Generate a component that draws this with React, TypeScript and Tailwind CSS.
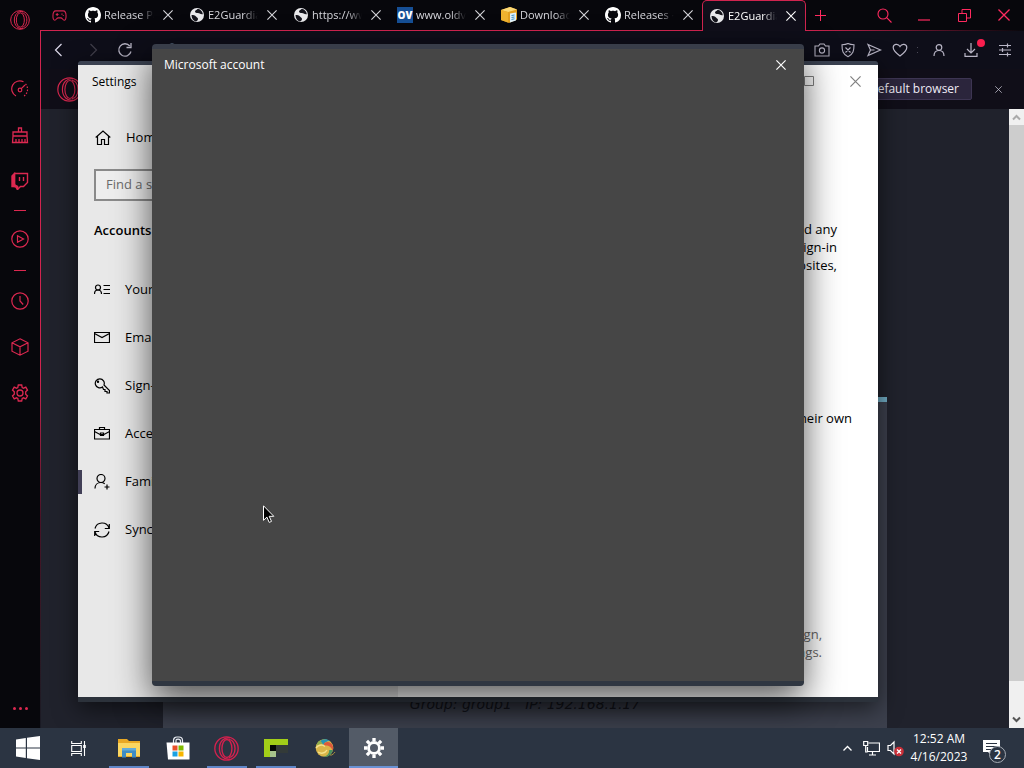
import React, { type ReactNode } from 'react';

type IconProps = { size?: number; width?: number; className?: string; children?: ReactNode; box?: number };

function Icon({ size = 18, width = 1.2, className = '', children, box = 18 }: IconProps) {
  return (
    <svg
      width={size}
      height={size}
      viewBox={`0 0 ${box} ${box}`}
      fill="none"
      stroke="currentColor"
      strokeWidth={width}
      className={`shrink-0 ${className}`}
      aria-hidden="true"
    >
      {children}
    </svg>
  );
}

function Cross({ size = 10, width = 1.1 }: { size?: number; width?: number }) {
  return (
    <Icon size={size} box={10} width={width}>
      <path d="M.4.4l9.2 9.2M9.6.4L.4 9.6" />
    </Icon>
  );
}

function OperaLogo({ size = 20, width = 1.2 }: { size?: number; width?: number }) {
  return (
    <Icon size={size} box={24} width={width}>
      <circle cx="12" cy="12" r="11.2" />
      <ellipse cx="12.4" cy="12" rx="4.8" ry="8.6" />
      <path d="M15.5 1.8C9.5.8 5.2 5.5 5.2 12s4.3 11.200 10.300 10.200M14.200 3.600c3.500-.6 6 3.600 6 8.400s-2.500 9-6 8.400" />
    </Icon>
  );
}

function GithubLogo() {
  return (
    <svg width="16" height="16" viewBox="0 0 16 16" fill="#fff" className="shrink-0" aria-hidden="true">
      <path d="M8 0C3.580 0 0 3.580 0 8c0 3.540 2.290 6.530 5.470 7.590.4.070.55-.17.55-.38 0-.19-.01-.82-.01-1.490-2.010.37-2.530-.49-2.690-.94-.09-.23-.48-.94-.82-1.130-.28-.15-.68-.52-.01-.53.63-.01 1.080.58 1.230.82.72 1.210 1.870.87 2.330.66.07-.52.28-.87.51-1.070-1.780-.2-3.640-.89-3.640-3.950 0-.87.31-1.590.82-2.150-.08-.2-.36-1.020.08-2.120 0 0 .67-.21 2.200.82.64-.18 1.320-.27 2-.27s1.360.09 2 .27c1.530-1.040 2.200-.82 2.200-.82.44 1.100.16 1.920.08 2.120.51.56.82 1.270.82 2.150 0 3.070-1.870 3.750-3.650 3.950.29.25.54.73.54 1.480 0 1.070-.01 1.930-.01 2.200 0 .21.15.46.55.38A8.010 8.010 0 0016 8c0-4.420-3.580-8-8-8z" />
    </svg>
  );
}

function GlobeLogo() {
  return (
    <svg width="16" height="16" viewBox="0 0 16 16" className="shrink-0" aria-hidden="true">
      <circle cx="8" cy="8" r="7" fill="#e9e9ec" />
      <path d="M2.500 8c2 .2 3.500 0 4.500 1.500s2 1 2 2.500-1.500 2-2 2.600C4.500 14 2.500 11.500 2.500 8z" fill="#14141c" />
      <path d="M8.500 2c-1 1.500-2.500 1.300-2.500 2.500s1.500 1.500 3 1.500 2 1.500 4.800 1.200C13.500 4 11 2 8.500 2z" fill="#14141c" />
    </svg>
  );
}

function OldVersionLogo() {
  return (
    <span className="flex size-4 shrink-0 items-center justify-center bg-[#164f96] font-['Open_Sans',sans-serif] text-[10px] font-extrabold leading-none text-white">
      OV
    </span>
  );
}

function BoxLogo() {
  return (
    <svg width="16" height="16" viewBox="0 0 16 16" className="shrink-0" aria-hidden="true">
      <path d="M0 3L9 0l7 2.500v10L8 16 0 13z" fill="#e3a020" />
      <path d="M0 3l7 2 9-2.500L9 0z" fill="#fbd875" />
      <path d="M0 3l7 2v10.500L0 13z" fill="#f0b32f" />
      <path d="M9 6.500l6-1v8l-6 2z" fill="#dff1fb" />
      <path d="M10.500 8.500l3-.5M10.500 10.500l3-.5M10.500 12.500l3-.7" stroke="#3f8fc0" />
    </svg>
  );
}

const tabs = [
  { title: 'Release Page', icon: <GithubLogo /> },
  { title: 'E2Guardian', icon: <GlobeLogo /> },
  { title: 'https://www', icon: <GlobeLogo /> },
  { title: 'www.oldversion', icon: <OldVersionLogo /> },
  { title: 'Downloads', icon: <BoxLogo /> },
  { title: 'Releases ·', icon: <GithubLogo /> },
  { title: 'E2Guardian', icon: <GlobeLogo />, active: true },
];

function TabStrip() {
  return (
    <div className="flex h-[31px] shrink-0 text-[#ff2a5f]">
      <button aria-label="GX Corner" className="flex w-[38px] shrink-0 items-center justify-center border-b border-[#d0244f]">
        <Icon size={15} box={16} width={1.200} className="text-[#d0244f]">
          <path d="M4 3h8c2 0 3 2 3 5.500 0 3-.7 4.500-2 4.500-1.500 0-2-2.500-3.500-2.500h-3C5 10.500 4.500 13 3 13c-1.300 0-2-1.500-2-4.500C1 5 2 3 4 3zM5.500 5.300v3.200M4 6.900h3M10 6.500h1.300M11.500 8h1" />
        </Icon>
      </button>
      {tabs.map((tab, i) => (
        <div
          key={i}
          className={
            tab.active
              ? 'flex w-[104px] shrink-0 items-center rounded-t-[5px] border border-b-0 border-[#d0244f] bg-[#100f1a] pl-1.5 text-white'
              : 'flex w-[104px] shrink-0 items-center border-b border-[#d0244f] pl-[7px] text-[#d6d6dc]'
          }
        >
          {tab.icon}
          <button className="ml-[3px] flex-1 overflow-hidden whitespace-nowrap text-left text-[11px] [mask-image:linear-gradient(to_right,black_70%,transparent)]">
            {tab.title}
          </button>
          <button aria-label={`Close ${tab.title}`} className="flex w-7 shrink-0 items-center justify-center">
            <Cross />
          </button>
        </div>
      ))}
      <div className="flex flex-1 flex-col">
        <div className="flex flex-1 items-center">
          <button aria-label="New tab" className="flex w-7 justify-center">
            <Icon size={11} box={11} width={1}>
              <path d="M5.500 0v11M0 5.500h11" />
            </Icon>
          </button>
          <div className="flex-1" />
          <button aria-label="Search tabs" className="flex w-10 justify-center">
            <Icon size={15} box={15} width={1.100}>
              <circle cx="6" cy="6" r="5" />
              <path d="M9.700 9.700L14.500 14.500" />
            </Icon>
          </button>
          <button aria-label="Minimize" className="flex w-10 justify-center">
            <Icon size={12} box={12} width={1.200}>
              <path d="M0 11h12" />
            </Icon>
          </button>
          <button aria-label="Restore" className="flex w-10 justify-center">
            <Icon size={13} box={13} width={1}>
              <path d="M.5 4.500h8v8h-8zM4 4V.5h8.500V9H9" />
            </Icon>
          </button>
          <button aria-label="Close browser" className="flex w-10 justify-center">
            <Cross size={12} />
          </button>
        </div>
        <div className="h-px bg-linear-to-r from-[#d0244f] to-transparent" />
      </div>
    </div>
  );
}

function Toolbar() {
  return (
    <div className="flex h-[38px] shrink-0 items-center bg-[#0e0e19] text-[#b9b6c6]">
      <button aria-label="Back" className="flex w-9 justify-center">
        <Icon size={14} box={14}>
          <path d="M9.500 1L3.500 7l6 6" className="stroke-[#dcd9ea]" />
        </Icon>
      </button>
      <button aria-label="Forward" className="flex w-8 justify-center text-[#403e4a]">
        <Icon size={14} box={14}>
          <path d="M4.500 1l6 6-6 6" />
        </Icon>
      </button>
      <button aria-label="Reload" className="flex w-8 justify-center">
        <Icon size={16} box={16} width={1.300}>
          <path d="M14 9.500A6.200 6.200 0 1 1 12.800 4M14 1v4.500H9.500" />
        </Icon>
      </button>
      <div className="flex flex-1 pl-6 text-[#8fb0d0]">
        <Icon size={14} box={14}>
          <circle cx="7" cy="7" r="6" />
        </Icon>
      </div>
      <button aria-label="Snapshot" className="flex w-[26px] justify-center">
        <Icon size={16} box={16} width={1.100}>
          <path d="M1 4h3.500L6 2h4l1.500 2H15v10H1z" />
          <circle cx="8" cy="8.500" r="2.600" />
        </Icon>
      </button>
      <button aria-label="Ad blocker" className="flex w-[26px] justify-center">
        <Icon size={16} box={16} width={1.100}>
          <path d="M8 1.500c2 1 4 1.200 6 1.200 0 6-.7 9.300-6 12-5.300-2.700-6-6-6-12 2 0 4-.2 6-1.200zM5.500 5.500l5 5M10.500 5.500l-5 5" />
        </Icon>
      </button>
      <button aria-label="Share" className="flex w-[26px] justify-center">
        <Icon size={16} box={16} width={1.200}>
          <path d="M2 2.500L14.500 8 2 13.500 4.500 8zM4.500 8h4" />
        </Icon>
      </button>
      <button aria-label="Bookmark" className="flex w-[26px] justify-center">
        <Icon size={16} box={16} width={1.200}>
          <path d="M8 14C4 11 1.200 8.500 1.200 5.500 1.200 2 6 1 8 4.500 10 1 14.800 2 14.800 5.500 14.800 8.500 12 11 8 14z" />
        </Icon>
      </button>
      <span className="flex w-2 flex-col items-center gap-1 text-[#4a4856]">
        <i className="size-px bg-current" />
        <i className="size-px bg-current" />
      </span>
      <button aria-label="Profile" className="flex w-9 justify-center">
        <Icon size={14} box={14} width={1.200}>
          <circle cx="7" cy="4.500" r="2.800" />
          <path d="M2 13c0-3.500 2-5.500 5-5.500s5 2 5 5.500" />
        </Icon>
      </button>
      <button aria-label="Downloads" className="relative flex w-7 justify-center">
        <Icon size={14} box={14} width={1.200}>
          <path d="M7 0v9.500M3 6l4 4 4-4M1 10v3.300h12V10" />
        </Icon>
        <span className="absolute -top-1 right-0 size-2 rounded-full bg-[#fa1e4e]" />
      </button>
      <button aria-label="Easy setup" className="flex w-[39px] justify-center">
        <Icon size={14} box={14} width={1.200}>
          <path d="M1 2.500h12M1 7h12M1 11.500h12M9.500.5v4M4.500 5v4M9.500 9.500v4" />
        </Icon>
      </button>
    </div>
  );
}

function SideButton({ label, children }: { label: string; children: ReactNode }) {
  return (
    <button aria-label={label} className="flex h-[46px] shrink-0 items-center justify-center">
      {children}
    </button>
  );
}

function Sidebar() {
  return (
    <nav aria-label="Browser sidebar" className="flex w-10 shrink-0 flex-col text-[#dc2850]">
      <button aria-label="Opera menu" className="mb-[26px] flex h-10 shrink-0 items-center justify-center">
        <OperaLogo size={20} />
      </button>
      <SideButton label="GX Control">
        <Icon>
          <path d="M5 16A8 8 0 0 1 12.500 1.800" />
          <path d="M14.500 4A8 8 0 0 1 13 16" strokeDasharray="1.500 1.500" />
          <circle cx="9" cy="10" r="1.800" />
          <path d="M10.300 8.700L14 5" />
        </Icon>
      </SideButton>
      <SideButton label="GX Cleaner">
        <Icon width={1.300}>
          <path d="M7.500 6V2h3v4M2 6h14v4H2zM2 10l-.5 6.500h15L16 10M5 16v-3M8 16v-3M11 16v-3M14 16v-3" />
        </Icon>
      </SideButton>
      <SideButton label="Twitch">
        <Icon width={1.400}>
          <path d="M3.500 1.500h13v9l-4 4h-3l-3 3v-3h-3z" />
          <path d="M1 4l2.500-2.500v11l3 2v3L4.500 14.500H1z" fill="currentColor" />
          <path d="M8.500 5v4M12.500 5v4" />
        </Icon>
      </SideButton>
      <div className="flex h-3 shrink-0 items-center justify-center"><i className="h-px w-3 bg-current" /></div>
      <SideButton label="Player">
        <Icon>
          <circle cx="9" cy="9" r="8.200" />
          <path d="M6.500 5.800L12.500 9l-6 3.200z" />
        </Icon>
      </SideButton>
      <div className="flex h-4 shrink-0 items-center justify-center"><i className="h-px w-3 bg-current" /></div>
      <SideButton label="History">
        <Icon>
          <circle cx="9" cy="9" r="8.200" />
          <path d="M9 4v5l3.200 3.500" />
        </Icon>
      </SideButton>
      <SideButton label="Extensions">
        <Icon>
          <path d="M9 .8l8 4v8.400l-8 4-8-4V4.800zM1 4.800l8 4 8-4M9 8.800v8.400" />
        </Icon>
      </SideButton>
      <SideButton label="Settings">
        <Icon width={1.300}>
          <path d="M7.300 1h3.400l.5 2.500 1.300.7 2.300-1 1.700 2.900-1.800 1.600v2.600l1.800 1.600-1.700 2.900-2.300-1-1.300.7-.5 2.500H7.300l-.5-2.500-1.300-.7-2.300 1-1.700-2.900 1.800-1.600V7.700L1.500 6.100l1.700-2.900 2.300 1 1.300-.7z" />
          <circle cx="9" cy="9" r="3" />
        </Icon>
      </SideButton>
      <button aria-label="Sidebar setup" className="mt-auto flex h-10 shrink-0 items-center justify-center gap-[3px]">
        <i className="size-[3px] rounded-full bg-current" />
        <i className="size-[3px] rounded-full bg-current" />
        <i className="size-[3px] rounded-full bg-current" />
      </button>
    </nav>
  );
}

function Browser() {
  return (
    <div className="flex h-full bg-[#07070c]">
      <Sidebar />
      <div className="mt-[30px] w-px shrink-0 bg-linear-to-b from-[#d0244f] from-50% via-[#4a1226] via-70% to-[#191a24]" />
      <div className="-ml-px flex min-w-0 flex-1 flex-col">
        <TabStrip />
        <div className="ml-px flex min-h-0 flex-1 flex-col">
          <Toolbar />
          <div className="flex h-10 shrink-0 items-center bg-[#100e18] pl-4">
            <span className="text-[#dc2850]"><OperaLogo size={25} width={1.100} /></span>
            <button className="ml-auto h-[22px] rounded-[2px] border border-[#3d3552] bg-[#2b253c] px-3 text-xs text-[#eeebf5]">
              Set as default browser
            </button>
            <button aria-label="Dismiss" className="flex w-[52px] justify-center text-[#c5c2d0]">
              <Cross size={7} />
            </button>
          </div>
          <div className="flex min-h-0 flex-1">
            <main className="flex min-w-0 flex-1 flex-col bg-[#20222c] pl-[122px] pr-[122px] pt-72">
              <div className="flex flex-1 flex-col justify-end border-t-[5px] border-[#72aec6] bg-[#3c404d] pb-3.5">
                <p className="whitespace-pre text-center font-['DejaVu_Sans',sans-serif] text-sm italic leading-5 text-[#14161e]">
                  {'Group: group1   IP: 192.168.1.17'}
                </p>
              </div>
            </main>
            <div className="flex w-[15px] shrink-0 flex-col items-center bg-[#f0f0f0] text-[#555]">
              <span className="flex h-4 items-center text-[#aaa]">
                <Icon size={9} box={9} width={2}><path d="M1 6.500L4.500 3 8 6.500" /></Icon>
              </span>
              <span className="w-full flex-1 bg-[#cdcdcd]" />
              <span className="flex h-[47px] items-end pb-1">
                <Icon size={9} box={9} width={2}><path d="M1 2.500L4.500 6 8 2.500" /></Icon>
              </span>
            </div>
          </div>
        </div>
      </div>
    </div>
  );
}

const navItems = [
  {
    label: 'Your info',
    icon: (
      <>
        <circle cx="4" cy="5.500" r="2.500" />
        <path d="M.5 12c0-2.500 1.500-4 3.500-4s3.500 1.500 3.500 4M9.500 3.500H16M9.500 7.500H16M9.500 11.500H16" />
      </>
    ),
  },
  { label: 'Email & accounts', icon: <path d="M.5 2.500h15v10H.5zM.5 3.500L8 7.500l7.500-4" /> },
  {
    label: 'Sign-in options',
    icon: (
      <>
        <path d="M8.500 9A4.500 4.500 0 1 1 10 7l5.500 5.500V15h-2.500v-1.500h-2v-2H9.500z" />
        <circle cx="4" cy="3.700" r=".6" />
      </>
    ),
  },
  {
    label: 'Access work or school',
    icon: <path d="M.5 3.500h15V13H.5zM5.500 3.500v-2h5v2M.5 5.500l5.500 3h4l5.500-3M6.500 7h3v2.500h-3z" />,
  },
  {
    label: 'Family & other users',
    selected: true,
    icon: (
      <>
        <circle cx="7" cy="4.500" r="4" />
        <path d="M1 14.500c0-3.500 2.500-6 6-6 1.500 0 2.700.4 3.700 1.200M13 10.500v5M10.500 13h5" />
      </>
    ),
  },
  {
    label: 'Sync your settings',
    icon: <path d="M1 6.500A7.300 7.300 0 0 1 15 6M15.300 2v4.500h-4.500M15 9.500A7.300 7.300 0 0 1 1 10M.7 14V9.500h4.500" />,
  },
];

function SettingsWindow() {
  return (
    <section
      aria-label="Settings"
      className="absolute bottom-[26px] left-[78px] right-[146px] top-[61px] flex flex-col rounded-t-[3px] border-b-[5px] border-t-[4px] border-b-[#2c323b] border-t-[#3a4150] bg-white text-black [box-shadow:0_6px_24px_rgba(0,0,0,0.6)]"
    >
      <div className="flex min-h-0 flex-1">
        <nav aria-label="Settings sections" className="w-80 shrink-0 bg-[#e8e8e8] text-[13px]">
          <h1 className="mb-4 flex h-[33px] items-center pl-3.5 text-xs">Settings</h1>
          <a href="#home" className="flex h-12 items-center gap-[15px] pl-[17px]">
            <Icon size={16} box={16} width={1.200}>
              <path d="M.7 7.500L8 1l7.300 6.500M2.500 6v8.500h4V9.500h3v5h4V6" />
            </Icon>
            Home
          </a>
          <input
            aria-label="Find a setting"
            placeholder="Find a setting"
            className="mx-4 mt-[7px] block h-8 w-72 border-2 border-[#8a8a8a] bg-[#eeeeee] px-2.5 pb-0.5 text-[13px] placeholder:text-[#6b6b6b]"
          />
          <h2 className="mb-[11px] mt-1.5 flex h-12 items-center pl-4 font-semibold">Accounts</h2>
          {navItems.map((item) => (
            <a key={item.label} href="#section" className="flex h-12 items-center">
              <span className={item.selected ? 'h-6 w-1 bg-[#413f56]' : 'h-6 w-1'} />
              <Icon size={16} box={16} width={1.200} className="ml-3 mr-[15px]">{item.icon}</Icon>
              {item.label}
            </a>
          ))}
        </nav>
        <div className="flex flex-1 flex-col text-right text-[13px] leading-[18px]">
          <div className="flex h-8 shrink-0 items-center justify-end text-[#808080]">
            <button aria-label="Maximize" className="flex w-[46px] justify-center">
              <Icon size={10} box={10} width={1}><path d="M.5.500h9v9h-9z" /></Icon>
            </button>
            <button aria-label="Close settings" className="flex w-[46px] justify-center"><Cross size={11} /></button>
          </div>
          <p className="mt-[123px] pr-[41px]">
            add any<br />sign-in<br />websites,
          </p>
          <p className="mt-[135px] pr-[26px]">with their own</p>
          <p className="mt-auto pb-9 pr-14 text-[#666]">
            digital sign,<br />settings.
          </p>
        </div>
      </div>
    </section>
  );
}

function AccountDialog() {
  return (
    <section
      role="dialog"
      aria-label="Microsoft account"
      className="absolute bottom-[42px] left-[152px] right-[220px] top-11 rounded-[4px] border-b-[5px] border-t-[5px] border-b-[#2f3641] border-t-[#383d49] bg-[#464646] text-white [box-shadow:0_14px_36px_rgba(0,0,0,0.65)]"
    >
      <header className="flex h-8 items-center justify-between pl-3">
        <h2 className="text-xs">Microsoft account</h2>
        <button aria-label="Close dialog" className="flex w-[46px] justify-center"><Cross size={10} width={1.200} /></button>
      </header>
    </section>
  );
}

function TaskButton({ label, open, active, children }: { label: string; open?: boolean; active?: boolean; children: ReactNode }) {
  return (
    <button
      aria-label={label}
      className={
        active
          ? 'flex h-full w-[49px] flex-col items-center bg-[#535b67]'
          : 'flex h-full w-[49px] flex-col items-center'
      }
    >
      <span className="flex flex-1 items-center pt-0.5">{children}</span>
      <span className={active ? 'h-0.5 w-full bg-[#6a92d4]' : open ? 'h-0.5 w-10 bg-[#5f86c8]' : 'h-0.5'} />
    </button>
  );
}

function Taskbar() {
  return (
    <footer className="flex h-10 shrink-0 items-center bg-[#2b3442] text-white">
      <button aria-label="Start" className="flex w-14 justify-center">
        <svg width="24" height="24" viewBox="0 0 24 24" fill="#fff" aria-hidden="true">
          <path d="M0 3.400L9.800 2v9.500H0zM11 1.800L24 0v11.500H11zM0 12.500h9.800V22L0 20.600zM11 12.500h13V24l-13-1.800z" />
        </svg>
      </button>
      <button aria-label="Task view" className="flex w-12 justify-center pr-1">
        <Icon size={17} box={17} width={1.100}>
          <path d="M1.700 1v2.500h9.600V1M1.700 5.500h9.600v6H1.700zM1.700 16v-2.500h9.600V16M14.500 1v15" />
          <path d="M13.200 5h2.600v3h-2.600z" fill="currentColor" stroke="none" />
        </Icon>
      </button>
      <TaskButton label="File Explorer" open>
        <svg width="24" height="20" viewBox="0 0 24 20" aria-hidden="true">
          <path d="M1 1h9l2 2h11v16H1z" fill="#e9a824" />
          <path d="M1 5h22v13H1z" fill="#fbd661" />
          <path d="M5 10h14v9.500h-4V15H9v4.500H5z" fill="#3e8cc4" />
          <path d="M5 10h14v2.500H5z" fill="#63abd9" />
        </svg>
      </TaskButton>
      <TaskButton label="Store">
        <svg width="24" height="24" viewBox="0 0 24 24" aria-hidden="true">
          <path d="M7.500 7V4.500C7.500 2.500 9 1 11 1h2c2 0 3.500 1.500 3.500 3.500V7M10 7V4.500c0-2 4.500-2 4.500.5v2" fill="none" stroke="#e8ecf2" strokeWidth="1.200" />
          <path d="M.5 6.500h23V23q0 .5-.5.5H2z" fill="#fff" />
          <path d="M6.500 9.500h5v5h-5z" fill="#e8502a" /><path d="M12.500 9.500h5v5h-5z" fill="#7fba00" />
          <path d="M6.500 15.500h5v5h-5z" fill="#1ba1e2" /><path d="M12.500 15.500h5v5h-5z" fill="#f7b500" />
        </svg>
      </TaskButton>
      <TaskButton label="Opera GX" open>
        <span className="text-[#d4214e]"><OperaLogo size={25} width={1.300} /></span>
      </TaskButton>
      <TaskButton label="Remote desktop" open>
        <svg width="24" height="18" viewBox="0 0 24 18" aria-hidden="true">
          <path d="M12 6h12v8H12z" fill="#333a38" />
          <path d="M0 0h24v6H7v12H0z" fill="#a2ce18" />
          <path d="M6 6h6v6H6z" fill="#050805" />
          <path d="M6 12h6v6H6z" fill="#a8c48c" />
        </svg>
      </TaskButton>
      <TaskButton label="Swirl">
        <svg width="22" height="20" viewBox="0 0 22 20" aria-hidden="true">
          <circle cx="10.500" cy="10" r="8.800" fill="#d9b548" />
          <path d="M3 5.500C5 2 9 .8 13 1.500c-3 1-4 2.500-5 5C6 6 4 6.500 2.500 8z" fill="#8fae4e" />
          <path d="M6.500 3.200C9 .8 13 .5 16 3c-3.500 0-6 1.500-7 4.500C8.500 5.500 8 4 6.500 3.200z" fill="#2793b4" />
          <path d="M10 5.500C13 2.500 18 4 19 8.500c.3 2 0 3-.5 4.500C18 9 14.500 7 10 7.500z" fill="#dc5a3c" />
          <path d="M18.800 12c-1 4.500-5 7.500-9.500 6.800 4-.8 6-3 6-6.800z" fill="#4a9460" />
          <path d="M2 10c2-3 6-4 9-1.500M4 14c3 2 7 1.500 9-2" stroke="#f5e28c" strokeWidth="1.500" fill="none" />
          <path d="M16.500 17.500c2-.7 3.500-2 4.500-3.500" stroke="#a8913c" fill="none" />
        </svg>
      </TaskButton>
      <TaskButton label="Settings" active>
        <svg width="20" height="20" viewBox="0 0 18 18" fill="none" stroke="#fff" aria-hidden="true">
          <circle cx="9" cy="9" r="4.900" strokeWidth="2.600" />
          <path d="M9 0v3M9 15v3M0 9h3M15 9h3M2.600 2.600l2.200 2.200M13.200 13.200l2.200 2.200M15.400 2.600l-2.200 2.200M4.800 13.200l-2.200 2.200" strokeWidth="3" />
        </svg>
      </TaskButton>
      <div className="ml-auto flex h-full items-center">
        <button aria-label="Hidden icons" className="flex w-6 justify-center">
          <Icon size={9} box={9} width={1.300}><path d="M.5 6.500l4-4 4 4" /></Icon>
        </button>
        <button aria-label="Network" className="flex w-6 justify-center">
          <Icon size={17} box={17} width={1.200}>
            <path d="M5.500 3h11v8.500h-12V7M9.500 11.500V15M6 15h7M.7 1.500h4v4h-4zM2.700 5.500V12h2" />
          </Icon>
        </button>
        <button aria-label="Volume muted" className="flex w-6 justify-center">
          <svg width="17" height="17" viewBox="0 0 17 17" fill="none" aria-hidden="true">
            <path d="M1 5.500h2.500L7 2v12l-3.500-3.500H1z" stroke="#fff" strokeWidth="1.200" />
            <circle cx="12" cy="11.500" r="4.800" fill="#c92f38" />
            <path d="M10 9.500l4 4M14 9.500l-4 4" stroke="#fff" strokeWidth="1.300" />
          </svg>
        </button>
        <button className="w-16 text-center text-xs leading-[18px]">
          12:52 AM<br />4/16/2023
        </button>
        <button aria-label="Notifications" className="relative flex w-[53px] justify-center pr-3">
          <svg width="17" height="16" viewBox="0 0 17 16" aria-hidden="true">
            <path d="M0 0h17v12H9v4l-4-4H0z" fill="#fff" />
            <path d="M3 3.500h11M3 6.500h11M3 9.500h7" stroke="#2b3442" />
          </svg>
          <span className="absolute left-[18px] top-1.5 flex size-[17px] items-center justify-center rounded-full border border-[#a8adb5] bg-[#2b3442] text-xs font-semibold leading-none">2</span>
        </button>
      </div>
    </footer>
  );
}

export default function App() {
  return (
    <div className="flex h-screen flex-col overflow-hidden font-['Open_Sans','Noto_Sans',sans-serif]">
      <div className="relative min-h-0 flex-1 overflow-hidden">
        <Browser />
        <SettingsWindow />
        <AccountDialog />
        <svg width="12" height="19" viewBox="0 0 12 19" className="absolute left-[263px] top-[505px]" aria-hidden="true">
          <path d="M.5.800v14.500l3.400-3.200 2.300 5.300 2.300-1-2.300-5.100h4.600z" fill="#000" stroke="#fff" />
        </svg>
      </div>
      <Taskbar />
    </div>
  );
}
